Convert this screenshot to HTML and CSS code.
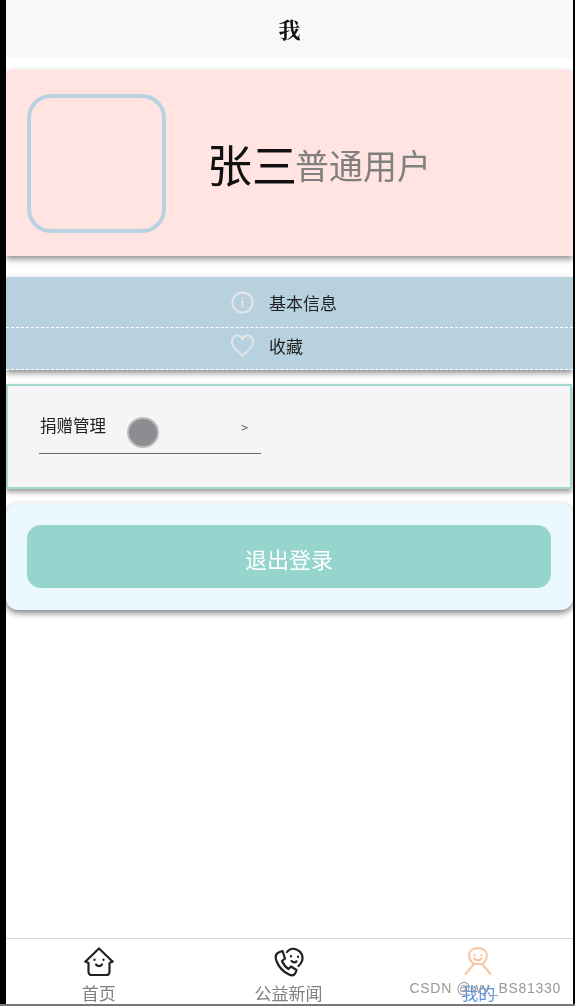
FILE: index.html
```html
<!DOCTYPE html>
<html lang="zh">
  <head>
    <meta charset="utf-8">
    <title>我</title>
    <link rel="stylesheet" href="styles.css">
  </head>
  <body>
    <div class="page">
      <div class="nav-title">我</div>

      <div class="user-card">
        <div class="avatar"></div>
        <div class="user-name">张三</div>
        <div class="user-role">普通用户</div>
      </div>

      <div class="menu-card">
        <div class="menu-row">
          <svg class="menu-icon" viewBox="0 0 24 24" fill="none" stroke="#e6e6e6" stroke-width="2">
            <circle cx="12" cy="12" r="10.500"/>
            <path d="M12 7v1.500M12 10.500v6.500"/>
          </svg>
          <span>基本信息</span>
        </div>
        <div class="menu-row menu-row-low">
          <svg class="menu-icon" viewBox="0 0 24 24" fill="none" stroke="#e6e6e6" stroke-width="2">
            <path d="M12 22.500C5.500 17 1 13.500 1 7.800 1 4 3.800 1.500 6.800 1.500 9 1.500 11 2.800 12 5 13 2.800 15 1.500 17.200 1.500 20.200 1.500 23 4 23 7.800 23 13.500 18.500 17 12 22.500Z"/>
          </svg>
          <span>收藏</span>
        </div>
      </div>

      <div class="manage-card">
        <div class="manage-row">
          <span class="manage-text">捐赠管理</span>
          <span class="manage-dot"></span>
          <span class="manage-arrow">&gt;</span>
        </div>
      </div>

      <div class="logout-card">
        <div class="logout-btn">退出登录</div>
      </div>

      <div class="tabbar">
        <div class="tab">
          <svg class="tab-icon" viewBox="0 0 30 30" fill="none" stroke="#222" stroke-width="2.200" stroke-linejoin="round" stroke-linecap="round">
            <path d="M1.500 14.500 15 1.500 28.500 14.500"/>
            <path d="M1.500 14.500 4.500 16V25a3 3 0 0 0 3 3h15a3 3 0 0 0 3-3V16l3-1.500"/>
            <path d="M10.500 12.500v.5M19.500 12.500v.5M12 17.500c1.800 2.200 4.200 2.200 6 0"/>
          </svg>
          <span class="tab-text">首页</span>
        </div>
        <div class="tab">
          <svg class="tab-icon" viewBox="0 0 30 30" fill="none" stroke="#222" stroke-width="2.200" stroke-linejoin="round" stroke-linecap="round">
            <path d="M8.500 4 4.500 5.500C1.500 7 1 10 2.500 14c2.500 6.500 7 11 12.500 13.500 3 1.300 5.500.5 6.500-1.500l1-3-5.500-3.500-2.500 2.500C12 20.500 9.500 17.500 8 14l3-2.500Z"/>
            <path d="M13 5C15 2 19 1 22.500 2.500 27.500 4.500 29.500 9.500 28 14c-.7 2-2 3.800-3.500 5"/>
            <path d="M17 9v.5M24 9.500v.5M17.500 14c1.500 1.500 3.500 1.500 5 .3"/>
          </svg>
          <span class="tab-text">公益新闻</span>
        </div>
        <div class="tab">
          <svg class="tab-icon" viewBox="0 0 30 30" fill="none" stroke="#f8c8a4" stroke-width="2.200" stroke-linejoin="round" stroke-linecap="round">
            <path d="M8.500 3C6 5 5.500 9 7 12.500c1 2.300 2.500 3.800 4 4.500h8c1.500-.7 3-2.200 4-4.500C24.500 9 24 5 21.500 3 18 .5 12 .5 8.500 3Z"/>
            <path d="M11 17 2.500 27M19 17l8.500 10"/>
            <path d="M11.500 8v.5M18.500 8v.5M11.500 11.500c2 2.500 5 2.500 7 0"/>
          </svg>
          <span class="tab-text tab-on">我的</span>
        </div>
        <span class="mark">CSDN @wy_BS81330</span>
      </div>
    </div>
  </body>
</html>
```

FILE: styles.css
```css
html, body {margin: 0; height: 100%; background-color: #000}
body {padding: 0 2px 0 6px; box-sizing: border-box; border-bottom: 2px solid #777; font-family: "Noto Sans CJK SC", "Liberation Sans", sans-serif}

.page {position: relative; display: flex; flex-direction: column; height: 1004px; background-color: #fff; overflow: hidden; filter: blur(.35px)}

.nav-title {height: 58px; line-height: 57px; text-align: center; font-size: 22px; font-weight: 700; color: #111; font-family: "Noto Serif CJK SC", "Noto Sans CJK SC", serif; background-color: #f8f8f8}

.user-card {display: flex; align-items: center; height: 186px; margin-top: 12px; padding-left: 21px; background-color: #ffe4e1; border-radius: 6px 6px 0 0; box-shadow: 0 3px 6px rgba(0, 0, 0, .45)}
.avatar {width: 131px; height: 131px; border: 4px solid #b8d3df; border-radius: 24px}
.user-name {margin-left: 41px; font-size: 45px; color: #111}
.user-role {margin: 3px 0 0 -2px; font-size: 34px; color: #808080}

.menu-card {margin-top: 21px; height: 93px; background-color: #b7d2de; box-shadow: 0 3px 6px rgba(0, 0, 0, .45)}
.menu-row {display: flex; align-items: center; height: 51px; padding-left: 225px; font-size: 17px; color: #222; box-sizing: border-box; border-bottom: 1px dashed #fff}
.menu-row-low {height: 42px; padding-bottom: 7px}
.menu-row span {margin-left: 15px}
.menu-icon {width: 23px; height: 23px}

.manage-card {margin: 14px 1px 0 0; height: 105px; box-sizing: border-box; padding: 18px 31px 0; background-color: #f5f5f8; border: 2px solid #a3d8cc; box-shadow: 0 3px 5px rgba(0, 0, 0, .4)}
.manage-row {display: flex; width: 222px; height: 50px; box-sizing: border-box; border-bottom: 1px solid #666}
.manage-text {margin: 9px 0 0 1px; font-size: 16.500px; color: #222; line-height: 24px}
.manage-dot {width: 28px; height: 27px; margin: 13px 0 0 21px; border: 2px solid #bbb; border-radius: 50%; background-color: #8e8c90}
.manage-arrow {margin: 14px 0 0 auto; padding-right: 13px; font-size: 12px; color: #555}

.logout-card {margin-top: 14px; height: 107px; box-sizing: border-box; padding: 22px 22px 0 21px; background-color: #ebf8ff; border-radius: 12px; box-shadow: 0 3px 6px rgba(0, 0, 0, .5)}
.logout-btn {height: 63px; line-height: 66px; text-align: center; font-size: 22px; color: #fff; background-color: #96d5cd; border-radius: 14px}

.tabbar {position: relative; display: flex; margin: auto 0 0 -2px; height: 66px; border-top: 1px solid #d8d8d8; box-sizing: border-box}
.tab {flex: 1; display: flex; flex-direction: column; align-items: center; padding-top: 8px}
.tab-icon {width: 30px; height: 30px}
.tab-text {margin-top: 5px; font-size: 17px; line-height: 22px; color: #808080}
.tab-on {color: #5b93e6}
.mark {position: absolute; right: 12px; top: 41px; font-family: "Liberation Sans", sans-serif; font-size: 14px; letter-spacing: .7px; color: #999}
```
